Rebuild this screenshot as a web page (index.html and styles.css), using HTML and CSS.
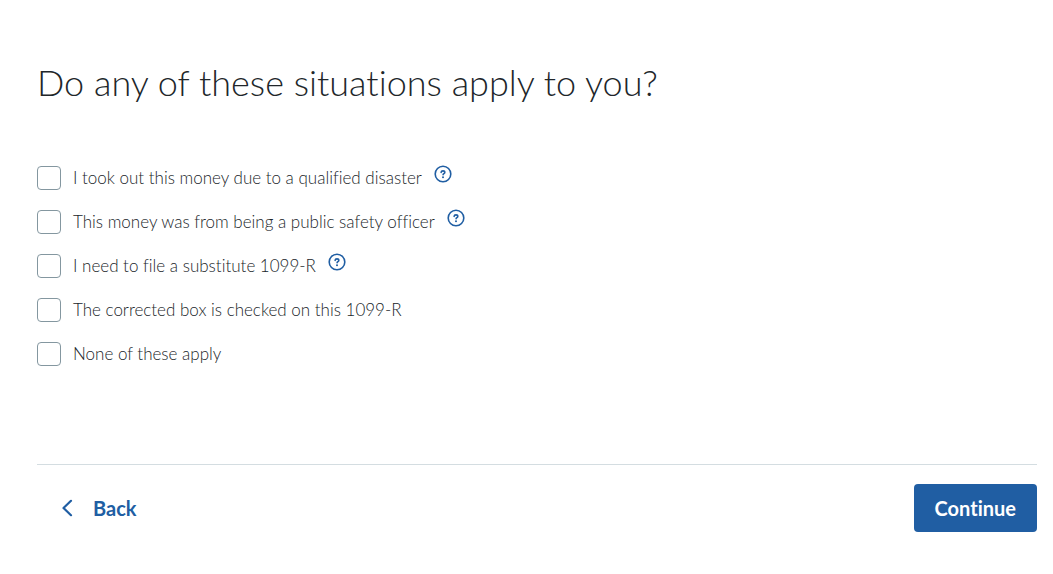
FILE: index.html
```html
<!DOCTYPE html>
<html lang="en">
<head>
    <meta charset="UTF-8">
    <meta name="viewport" content="width=device-width, initial-scale=1.0">
    <title>Do any of these situations apply to you?</title>
    <link rel="stylesheet" href="styles.css">
</head>
<body>
    <!-- question mark icon shared by the help buttons -->
    <svg class="icon-defs" aria-hidden="true">
        <symbol id="icon-help" viewBox="0 0 18 18">
            <circle cx="9" cy="9" r="7.8" fill="none" stroke="currentColor" stroke-width="1.6"/>
            <path d="M7.1 7.4C7.2 6.4 8 5.9 9 5.9s1.8.6 1.8 1.5c0 1.2-1.7 1.2-1.7 2.3" fill="none" stroke="currentColor" stroke-width="1.6" stroke-linecap="round"/>
            <circle cx="9" cy="12.2" r="1" fill="currentColor"/>
        </symbol>
    </svg>

    <form class="page">
        <h1 id="question">Do any of these situations apply to you?</h1>

        <div class="options" role="group" aria-labelledby="question">
            <div class="option">
                <input type="checkbox" id="disaster" name="situation" value="disaster">
                <label for="disaster">I took out this money due to a qualified disaster</label>
                <button type="button" class="help-btn" aria-label="Help"><svg><use href="#icon-help"/></svg></button>
            </div>
            <div class="option">
                <input type="checkbox" id="officer" name="situation" value="officer">
                <label for="officer">This money was from being a public safety officer</label>
                <button type="button" class="help-btn" aria-label="Help"><svg><use href="#icon-help"/></svg></button>
            </div>
            <div class="option">
                <input type="checkbox" id="substitute" name="situation" value="substitute">
                <label for="substitute">I need to file a substitute 1099-R</label>
                <button type="button" class="help-btn" aria-label="Help"><svg><use href="#icon-help"/></svg></button>
            </div>
            <div class="option">
                <input type="checkbox" id="corrected" name="situation" value="corrected">
                <label for="corrected">The corrected box is checked on this 1099-R</label>
            </div>
            <div class="option">
                <input type="checkbox" id="none" name="situation" value="none">
                <label for="none">None of these apply</label>
            </div>
        </div>

        <div class="actions">
            <button type="button" class="back-btn">
                <svg viewBox="0 0 12 18" aria-hidden="true"><path d="M10 1.800L2.500 9l7.500 7.200" fill="none" stroke="currentColor" stroke-width="2.200" stroke-linecap="round" stroke-linejoin="round"/></svg>
                Back
            </button>
            <button type="submit" class="continue-btn">Continue</button>
        </div>
    </form>
</body>
</html>
```

FILE: styles.css
```css
* {
    box-sizing: border-box;
}
body {
    margin: 0;
    font-family: "Avenir Next", Avenir, Lato, sans-serif;
    font-size: 17px;
    font-variant-ligatures: none;
    color: #21262a;
    background-color: white;
}
.icon-defs {
    display: none;
}
.page {
    padding: 60px 16px 40px 37px;
}
h1 {
    margin: 0 0 62px;
    font-size: 36px;
    font-weight: 300;
    line-height: 44px;
}
.options {
    display: flex;
    flex-direction: column;
    gap: 20px;
}
.option {
    display: flex;
    align-items: flex-start;
    gap: 12px;
}
.option input {
    appearance: none;
    width: 24px;
    height: 24px;
    margin: 0;
    border: 1px solid #8497a0;
    border-radius: 4px;
    background-color: white;
    cursor: pointer;
}
.option input:checked {
    background-color: #205ea3;
    border-color: #205ea3;
}
.option label {
    line-height: 24px;
    font-weight: 300;
    cursor: pointer;
}
button {
    display: flex;
    align-items: center;
    border: none;
    font-family: inherit;
    font-variant-ligatures: inherit;
    cursor: pointer;
}
.help-btn {
    height: 16px;
    padding: 0;
    color: #205ea3;
    background: none;
}
.help-btn svg {
    width: 18px;
    height: 18px;
}
.actions {
    display: flex;
    justify-content: space-between;
    margin-top: 98px;
    padding-top: 19px;
    border-top: 1px solid #d4dde1;
}
.back-btn,
.continue-btn {
    height: 48px;
    padding: 0 21px;
    font-size: 20px;
    font-weight: 700;
    border-radius: 4px;
}
.back-btn {
    gap: 20px;
    padding-left: 24px;
    color: #205ea3;
    background: none;
}
.back-btn svg {
    width: 12px;
    height: 18px;
}
.continue-btn {
    color: white;
    background-color: #205ea3;
}
```
